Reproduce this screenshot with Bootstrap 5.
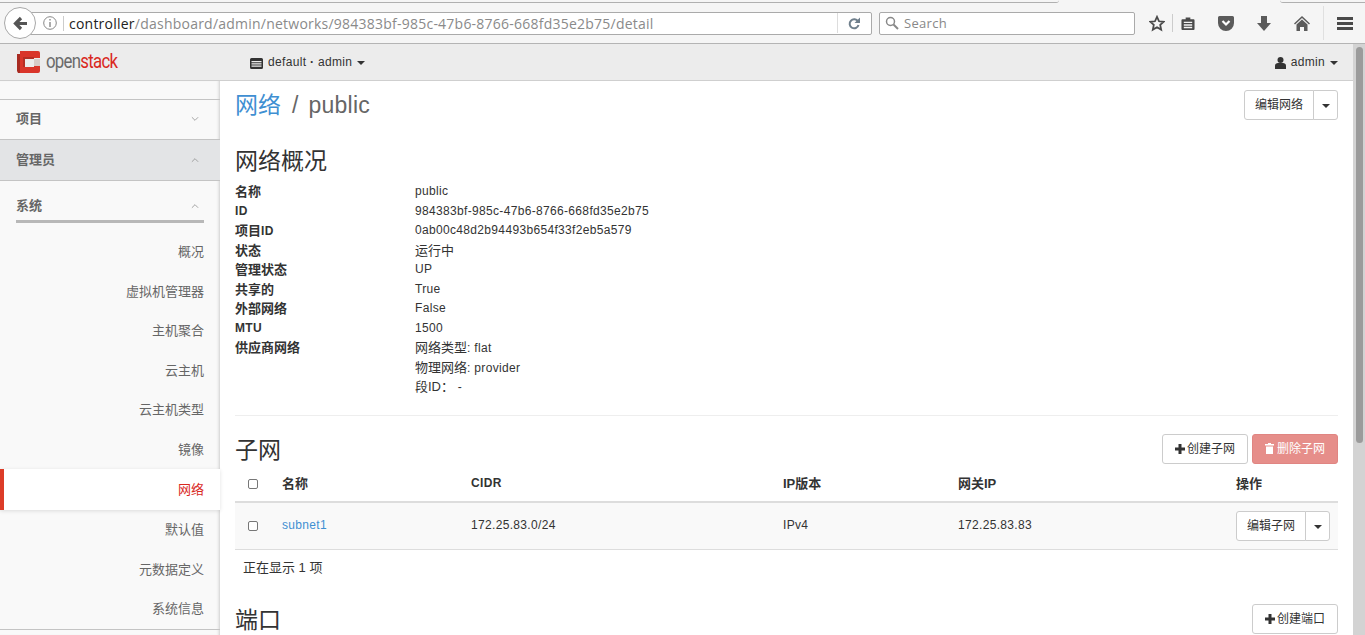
<!DOCTYPE html>
<html lang="zh-CN">
<head>
    <meta charset="UTF-8">
    <meta name="viewport" content="width=device-width, initial-scale=1.0">
    <title>网络详情</title>
    <link href="https://cdn.jsdelivr.net/npm/bootstrap@5.3.0/dist/css/bootstrap.min.css" rel="stylesheet">
    <style>
        html, body { height: 635px; overflow: hidden; }
        body { font-family: "Liberation Sans", "Noto Sans CJK SC", sans-serif; font-size: 12px; line-height: 19.5px; letter-spacing: .33px; color: #333; background: #fff; }
        .zh { font-size: 13px; letter-spacing: 0; }

        /* browser chrome */
        .browser-bar { height: 44px; background: #f5f5f5; border-bottom: 1px solid #b4b4b4; }
        .tab-line { height: 7px; }
        .tab-left { width: 1059px; height: 3px; border-bottom: 1px solid #b0b0b0; border-bottom-right-radius: 6px; }
        .tab-right { flex: 1; margin-left: 221px; height: 3px; border-bottom: 1px solid #b0b0b0; border-bottom-left-radius: 6px; }
        .tab-stub { height: 3px; }
        .tool-row { height: 34px; padding-left: 4px; margin-top: -1px; }
        .back-btn { width: 32px; height: 32px; flex: none; border-radius: 50%; border: 1px solid #a8a8a8; background: #fff; position: relative; z-index: 1; }
        .url-box, .search-box { height: 23px; background: #fff; border: 1px solid #aaa; font-family: "Open Sans", sans-serif; line-height: 21px; }
        .url-box { width: 842px; flex: none; margin-left: -6px; border-radius: 0 2px 2px 0; padding-left: 12px; color: #8a8a8a; font-size: 14px; letter-spacing: .23px; }
        .url-box b { font-weight: 400; color: #222; }
        .info-sep { width: 1px; height: 15px; background: #ccc; margin: 0 5px 0 6px; }
        .reload-sep { width: 1px; height: 20px; background: #ddd; }
        .reload-ico { margin: 0 11px 0 10px; }
        .search-box { width: 256px; flex: none; margin-left: 7px; border-radius: 2px; color: #888; padding-left: 5px; gap: 5px; font-size: 13px; letter-spacing: .3px; }
        .tool-icons { margin-left: 14px; }
        .tool-sep { width: 1px; height: 18px; background: #ccc; margin: 0 8px 0 7px; }
        .tool-wide { margin-left: 23px; }
        .tool-sep-tall { width: 1px; height: 34px; background: #e0e0e0; margin: 0 13px; }

        /* app */
        .app-main { height: 591px; }
        .app-col { width: 1353px; min-width: 0; }
        .fake-scroll { width: 12px; background: #d3d3d3; padding: 3px 2px 0 3px; }
        .fake-thumb { height: 396px; background: #9b9b9b; border-radius: 4px; }

        .top-nav { height: 37px; background: #ececec; border-bottom: 1px solid #cfcfcf; padding: 0 15px 0 17px; }
        .os-logo { width: 233px; }
        .os-logo svg { margin-right: 6px; }
        .os-name { display: inline-block; font-family: "Roboto", sans-serif; font-size: 21px; letter-spacing: -.9px; color: #6a6a6a; transform: scaleX(.8); transform-origin: left center; white-space: nowrap; }
        .os-name em { font-style: normal; color: #d9281e; }
        .nav-txt { gap: 5px; color: #333; padding-top: 2px; }
        .dot-sep { font-weight: 700; }
        .caret-dn { display: inline-block; width: 0; height: 0; border-top: 4px solid #333; border-left: 4px solid transparent; border-right: 4px solid transparent; vertical-align: middle; }

        .app-body { height: 554px; }
        .side-menu { width: 220px; flex: none; background: #f9f9f9; padding-top: 18px; box-shadow: inset -3px 0 3px -2px #ccc; font-size: 13px; letter-spacing: 0; color: #666; }
        .side-head { height: 41px; border-top: 1px solid #c4c4c4; padding: 0 16px; font-weight: 700; }
        .side-head.is-open { background: #e3e4e6; }
        .side-head:first-child { height: 40px; padding-bottom: 2px; }
        .side-sub { border-top: 1px solid #c4c4c4; padding: 14px 16px 0; }
        .side-sub-title { border-bottom: 3px solid #b8b8b8; padding-bottom: 4px; font-weight: 700; height: 28px; }
        .side-items { padding-top: 9px; margin: 0; border-bottom: 1px solid #c4c4c4; }
        .side-items a { display: block; text-align: right; padding: 10px 16px 10px 0; color: #666; text-decoration: none; height: 39.5px; }
        .side-items a.is-current { background: #fff; color: #d9281e; border-left: 4px solid #dc3c28; box-shadow: 0 1px 4px rgba(0,0,0,.12); position: relative; height: 41px; padding-top: 10.75px; }
        .chev { width: 8px; height: 6px; margin-right: 5px; }

        .page-main { flex: 1; min-width: 0; padding: 0 15px; }
        .page-top { height: 64px; padding-top: 9px; }
        .crumb { font-size: 23px; line-height: 30px; letter-spacing: .2px; color: #666; }
        .crumb a { color: #3f8fd2; text-decoration: none; letter-spacing: 0; }
        .crumb i { font-style: normal; margin: 0 10px 0 11px; }
        .sec-title { font-size: 23px; font-weight: 400; line-height: 30px; letter-spacing: 0; margin: 1px 0 0; color: #333; }

        .btn { letter-spacing: 0; }
        .btn-plain { --bs-btn-font-size: 12px; --bs-btn-padding-y: 4px; --bs-btn-padding-x: 10px; --bs-btn-border-color: #ccc; --bs-btn-color: #333; --bs-btn-bg: #fff; --bs-btn-border-radius: 3px; --bs-btn-line-height: 20px; }
        .btn-act { --bs-btn-padding-x: 12px; }
        .btn-fade { --bs-btn-font-size: 12px; --bs-btn-padding-y: 4px; --bs-btn-padding-x: 12px; --bs-btn-line-height: 20px; --bs-btn-border-radius: 3px; background: #e68e8a; border: 1px solid #e08582; color: #fff; }
        .btn-ico { margin: -2px 2px 0 0; vertical-align: middle; }
        .btn-fade .btn-ico { margin-right: 3px; }
        .split-caret { width: 25px; --bs-btn-padding-x: 0; }

        .detail-list { display: grid; grid-template-columns: 180px 1fr; margin: 0; padding-top: 6px; padding-bottom: 18.5px; border-bottom: 1px solid #eee; }
        .detail-list dt { font-weight: 700; height: 19.5px; }
        .detail-list dd { margin: 0; }
        .info-line { height: 19.5px; }
        .detail-list dd.one-line { height: 19.5px; }

        .sec-head { height: 54px; padding-top: 18px; }
        .net-table { margin: 0; table-layout: fixed; --bs-table-border-color: #ddd; font-size: 12px; color: #333; }
        .net-table th { border-bottom: 2px solid #ddd; padding: 0 8px 3px; height: 32px; vertical-align: middle; }
        .net-table td { padding: 0 8px; height: 47px; vertical-align: middle; background: #f9f9f9; }
        .net-table a { color: #3f8fd2; text-decoration: none; }
        .w-check { width: 39px; }
        .w-name { width: 189px; }
        .w-cidr { width: 312px; }
        .w-ver { width: 175px; }
        .w-gate { width: 278px; }
        .box-mark { display: block; width: 10px; height: 10px; border: 1px solid #777; border-radius: 2px; background: #fff; margin-left: 5px; }
        .count-line { padding: 8px 8px 8px; }
    </style>
</head>
<body>
    <div class="browser-bar">
        <div class="tab-line d-flex align-items-start">
            <div class="tab-left"></div>
            <div class="tab-right"></div>
        </div>
        <div class="tool-row d-flex align-items-center">
            <div class="back-btn d-flex align-items-center justify-content-center">
                <svg width="15" height="15" viewBox="0 0 15 15"><path d="M8 2 2.500 7.500 8 13M3 7.500h11" fill="none" stroke="#555" stroke-width="3.200"/></svg>
            </div>
            <div class="url-box d-flex align-items-center">
                <svg width="14" height="14" viewBox="0 0 14 14"><circle cx="7" cy="7" r="6.300" fill="none" stroke="#888"/><path d="M6.300 3h1.400v1.500H6.300zM6.300 6h1.400v5H6.300z" fill="#888"/></svg>
                <span class="info-sep"></span>
                <span class="flex-grow-1"><b>controller</b>/dashboard/admin/networks/984383bf-985c-47b6-8766-668fd35e2b75/detail</span>
                <span class="reload-sep"></span>
                <svg class="reload-ico" width="12" height="13" viewBox="0 0 12 13"><path d="M10 4.500A4.500 4.500 0 1 0 10.500 8" fill="none" stroke="#6f7f8c" stroke-width="2"/><path d="M12 .5v5.500H6.500z" fill="#6f7f8c"/></svg>
            </div>
            <div class="search-box d-flex align-items-center">
                <svg width="14" height="14" viewBox="0 0 14 14"><circle cx="5.500" cy="5.500" r="4" fill="none" stroke="#888" stroke-width="1.500"/><path d="m8.500 8.500 4.500 4.500" stroke="#888" stroke-width="2"/></svg>
                <span>Search</span>
            </div>
            <div class="tool-icons d-flex align-items-center">
                <svg width="16" height="17" viewBox="0 0 18 18"><path d="m9 1.500 2.300 5 5.200.6-3.900 3.500 1.100 5.300L9 13.200l-4.700 2.700 1.100-5.300L1.500 7.100l5.200-.6z" fill="none" stroke="#4a4a4a" stroke-width="2"/></svg>
                <span class="tool-sep"></span>
                <svg width="14" height="15" viewBox="0 0 15 16"><path d="M1.500 3.500h3.500V1.500h5v2h3.500a1 1 0 0 1 1 1V14a1 1 0 0 1-1 1h-12a1 1 0 0 1-1-1V4.500a1 1 0 0 1 1-1z" fill="#4a4a4a"/><path d="M3 6h9v1.500H3zM3 8.800h9v1.500H3zM3 11.500h9V13H3z" fill="#f5f5f5"/></svg>
                <svg class="tool-wide" width="16" height="15" viewBox="0 0 16 15"><path d="M1.500 0h13A1.500 1.500 0 0 1 16 1.500V7A8 8 0 0 1 0 7V1.500A1.500 1.500 0 0 1 1.500 0z" fill="#5b5b5b"/><path d="m4.500 5 3.500 3.500L11.500 5" fill="none" stroke="#fff" stroke-width="2.200"/></svg>
                <svg class="tool-wide" width="14" height="15" viewBox="0 0 14 15"><path d="M4 0h6v7h4l-7 8-7-8h4z" fill="#5b5b5b"/></svg>
                <svg class="tool-wide" width="16" height="15" viewBox="0 0 16 15"><path d="M8 0 0 7.500l1 1L8 2l7 6.500 1-1zM8 3.500 2.500 8.500V15H6v-4h4v4h3.500V8.500z" fill="#5b5b5b"/></svg>
                <span class="tool-sep-tall"></span>
                <svg width="16" height="13" viewBox="0 0 16 13"><path d="M0 0h16v3H0zM0 5h16v3H0zM0 10h16v3H0z" fill="#4a4a4a"/></svg>
            </div>
        </div>
    </div>

    <div class="app-main d-flex">
        <div class="app-col">
            <nav class="top-nav d-flex align-items-center">
                <div class="os-logo d-flex align-items-center">
                    <svg width="23" height="22" viewBox="0 0 23 22"><path d="M3 0h18a2 2 0 0 1 2 2v5h-6V6H6v10h11v-1h6v5a2 2 0 0 1-2 2H3z" fill="#d9352a"/><path d="M0 3h3v19H1l-1-2z" fill="#a82b21"/><path d="M6 6h11v2H8v8H6z" fill="#b52e24"/><path d="M17 8h6v7h-6z" fill="#c9b5b0" opacity=".6"/></svg>
                    <span class="os-name">open<em>stack</em></span>
                </div>
                <div class="nav-txt d-flex align-items-center">
                    <svg width="13" height="11" viewBox="0 0 13 11"><path d="M1.500 0h10A1.500 1.500 0 0 1 13 1.500v8a1.500 1.500 0 0 1-1.500 1.500h-10A1.500 1.500 0 0 1 0 9.500v-8A1.500 1.500 0 0 1 1.500 0z" fill="#333"/><path d="M1.500 3h10v1.200h-10zM1.500 5.300h10v1.200h-10zM1.500 7.600h10v1.200h-10z" fill="#eee"/></svg>
                    <span>default <span class="dot-sep">·</span> admin</span>
                    <span class="caret-dn"></span>
                </div>
                <div class="nav-txt d-flex align-items-center ms-auto">
                    <svg width="11" height="12" viewBox="0 0 11 12"><circle cx="5.500" cy="3" r="3" fill="#333"/><path d="M0 12V8.500C0 7 1.500 6 3 6h5c1.500 0 3 1 3 2.500V12z" fill="#333"/></svg>
                    <span>admin</span>
                    <span class="caret-dn"></span>
                </div>
            </nav>

            <div class="app-body d-flex">
                <aside class="side-menu">
                    <div class="side-head d-flex align-items-center justify-content-between">
                        <span>项目</span>
                        <svg class="chev" viewBox="0 0 9 6"><path d="m1 1 3.500 3.500L8 1" fill="none" stroke="#999"/></svg>
                    </div>
                    <div class="side-head is-open d-flex align-items-center justify-content-between">
                        <span>管理员</span>
                        <svg class="chev" viewBox="0 0 9 6"><path d="m1 5 3.500-3.500L8 5" fill="none" stroke="#999"/></svg>
                    </div>
                    <div class="side-sub">
                        <div class="side-sub-title d-flex align-items-center justify-content-between">
                            <span>系统</span>
                            <svg class="chev" viewBox="0 0 9 6"><path d="m1 5 3.500-3.500L8 5" fill="none" stroke="#999"/></svg>
                        </div>
                    </div>
                    <nav class="side-items">
                        <a href="#">概况</a>
                        <a href="#">虚拟机管理器</a>
                        <a href="#">主机聚合</a>
                        <a href="#">云主机</a>
                        <a href="#">云主机类型</a>
                        <a href="#">镜像</a>
                        <a href="#" class="is-current">网络</a>
                        <a href="#">默认值</a>
                        <a href="#">元数据定义</a>
                        <a href="#">系统信息</a>
                    </nav>
                </aside>

                <main class="page-main">
                    <div class="page-top d-flex justify-content-between align-items-start">
                        <div class="crumb"><a href="#">网络</a><i>/</i>public</div>
                        <div class="btn-group">
                            <button type="button" class="btn btn-plain">编辑网络</button>
                            <button type="button" class="btn btn-plain split-caret"><span class="caret-dn"></span></button>
                        </div>
                    </div>

                    <h3 class="sec-title">网络概况</h3>
                    <dl class="detail-list">
                        <dt class="zh">名称</dt><dd class="one-line">public</dd>
                        <dt>ID</dt><dd class="one-line">984383bf-985c-47b6-8766-668fd35e2b75</dd>
                        <dt><span class="zh">项目</span>ID</dt><dd class="one-line">0ab00c48d2b94493b654f33f2eb5a579</dd>
                        <dt class="zh">状态</dt><dd class="one-line zh">运行中</dd>
                        <dt class="zh">管理状态</dt><dd class="one-line">UP</dd>
                        <dt class="zh">共享的</dt><dd class="one-line">True</dd>
                        <dt class="zh">外部网络</dt><dd class="one-line">False</dd>
                        <dt>MTU</dt><dd class="one-line">1500</dd>
                        <dt class="zh">供应商网络</dt>
                        <dd>
                            <div class="info-line"><span class="zh">网络类型</span>: flat</div>
                            <div class="info-line"><span class="zh">物理网络</span>: provider</div>
                            <div class="info-line"><span class="zh">段ID：</span> -</div>
                        </dd>
                    </dl>

                    <div class="sec-head d-flex justify-content-between align-items-start">
                        <h3 class="sec-title">子网</h3>
                        <div class="d-flex gap-1">
                            <button type="button" class="btn btn-plain btn-act"><svg class="btn-ico" width="10" height="10" viewBox="0 0 10 10"><path d="M3.500 0h3v3.500H10v3H6.500V10h-3V6.500H0v-3h3.500z" fill="#333"/></svg>创建子网</button>
                            <button type="button" class="btn btn-fade"><svg class="btn-ico" width="9" height="11" viewBox="0 0 9 11"><path d="M3 0h3v1h3v1.500H0V1h3zM1 3.500h7V11H1z" fill="#fff"/></svg>删除子网</button>
                        </div>
                    </div>
                    <table class="table net-table">
                        <thead>
                            <tr>
                                <th class="w-check"><span class="box-mark"></span></th>
                                <th class="w-name zh">名称</th>
                                <th class="w-cidr">CIDR</th>
                                <th class="w-ver"><span class="zh">IP版本</span></th>
                                <th class="w-gate"><span class="zh">网关IP</span></th>
                                <th class="zh">操作</th>
                            </tr>
                        </thead>
                        <tbody>
                            <tr>
                                <td><span class="box-mark"></span></td>
                                <td><a href="#">subnet1</a></td>
                                <td>172.25.83.0/24</td>
                                <td>IPv4</td>
                                <td>172.25.83.83</td>
                                <td>
                                    <div class="btn-group">
                                        <button type="button" class="btn btn-plain">编辑子网</button>
                                        <button type="button" class="btn btn-plain split-caret"><span class="caret-dn"></span></button>
                                    </div>
                                </td>
                            </tr>
                        </tbody>
                    </table>
                    <div class="count-line"><span class="zh">正在显示 1 项</span></div>

                    <div class="sec-head d-flex justify-content-between align-items-start">
                        <h3 class="sec-title">端口</h3>
                        <button type="button" class="btn btn-plain btn-act"><svg class="btn-ico" width="10" height="10" viewBox="0 0 10 10"><path d="M3.500 0h3v3.500H10v3H6.500V10h-3V6.500H0v-3h3.500z" fill="#333"/></svg>创建端口</button>
                    </div>
                </main>
            </div>
        </div>
        <div class="fake-scroll"><div class="fake-thumb"></div></div>
    </div>

    <script src="https://cdn.jsdelivr.net/npm/bootstrap@5.3.0/dist/js/bootstrap.bundle.min.js"></script>
</body>
</html>
